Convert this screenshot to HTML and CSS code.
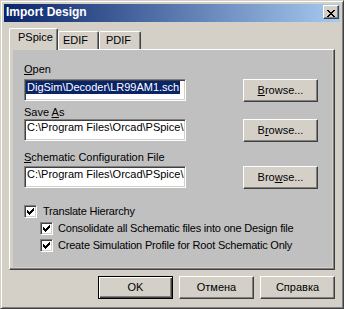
FILE: index.html
```html
<!DOCTYPE html>
<html lang="en">
<head>
    <meta charset="UTF-8">
    <meta name="viewport" content="width=device-width, initial-scale=1.0">
    <title>Import Design</title>
    <link rel="stylesheet" href="styles.css">
</head>
<body>
    <div class="window">
      <div class="titlebar">
        <span class="title">Import Design</span>
        <button class="close-btn" type="button" aria-label="Close">
          <svg width="8" height="7" viewBox="0 0 8 7" shape-rendering="crispEdges">
            <path d="M0 0h2v1h-2z M6 0h2v1h-2z M1 1h2v1h-2z M5 1h2v1h-2z M2 2h4v1h-4z M3 3h2v1h-2z M2 4h4v1h-4z M1 5h2v1h-2z M5 5h2v1h-2z M0 6h2v1h-2z M6 6h2v1h-2z" fill="#000"/>
          </svg>
        </button>
      </div>

      <div class="tabs">
        <div class="tab tab-active tab-pspice">PSpice</div>
        <div class="tab tab-edif">EDIF</div>
        <div class="tab tab-pdif">PDIF</div>
      </div>

      <div class="panel">
        <div class="page">
          <div class="label label-open"><u>O</u>pen</div>
          <div class="field-row">
            <div class="edit"><span class="edit-text selected">DigSim\Decoder\LR99AM1.sch</span></div>
            <button class="btn" type="button"><u>B</u>rowse...</button>
          </div>

          <div class="label label-save">Save <u>A</u>s</div>
          <div class="field-row">
            <div class="edit"><span class="edit-text">C:\Program Files\Orcad\PSpice\</span></div>
            <button class="btn" type="button">B<u>r</u>owse...</button>
          </div>

          <div class="label label-config"><u>S</u>chematic Configuration File</div>
          <div class="field-row">
            <div class="edit"><span class="edit-text">C:\Program Files\Orcad\PSpice\</span></div>
            <button class="btn" type="button">Bro<u>w</u>se...</button>
          </div>

          <div class="check-row check-first">
            <span class="checkbox">
              <svg width="7" height="7" viewBox="0 0 7 7" shape-rendering="crispEdges">
                <path d="M6 0h1v1h-1z M5 1h2v1h-2z M0 2h1v1h-1z M4 2h3v1h-3z M0 3h2v1h-2z M3 3h3v1h-3z M0 4h5v1h-5z M1 5h3v1h-3z M2 6h1v1h-1z" fill="#000"/>
              </svg>
            </span>
            <span class="check-text">Translate Hierarchy</span>
          </div>
          <div class="check-row check-sub">
            <span class="checkbox">
              <svg width="7" height="7" viewBox="0 0 7 7" shape-rendering="crispEdges">
                <path d="M6 0h1v1h-1z M5 1h2v1h-2z M0 2h1v1h-1z M4 2h3v1h-3z M0 3h2v1h-2z M3 3h3v1h-3z M0 4h5v1h-5z M1 5h3v1h-3z M2 6h1v1h-1z" fill="#000"/>
              </svg>
            </span>
            <span class="check-text">Consolidate all Schematic files into one Design file</span>
          </div>
          <div class="check-row check-sub">
            <span class="checkbox">
              <svg width="7" height="7" viewBox="0 0 7 7" shape-rendering="crispEdges">
                <path d="M6 0h1v1h-1z M5 1h2v1h-2z M0 2h1v1h-1z M4 2h3v1h-3z M0 3h2v1h-2z M3 3h3v1h-3z M0 4h5v1h-5z M1 5h3v1h-3z M2 6h1v1h-1z" fill="#000"/>
              </svg>
            </span>
            <span class="check-text">Create Simulation Profile for Root Schematic Only</span>
          </div>
        </div>
      </div>

      <div class="dialog-buttons">
        <button class="btn btn-default" type="button">OK</button>
        <button class="btn" type="button">Отмена</button>
        <button class="btn" type="button">Справка</button>
      </div>
    </div>
</body>
</html>
```

FILE: styles.css
```css
* {
    box-sizing: border-box;
}
body {
    margin: 0;
    background-color: #d4d0c8;
    font-family: "Liberation Sans", Arial, sans-serif;
    font-size: 11px;
    line-height: 13px;
    color: #000;
}
.window {
    display: flex;
    flex-direction: column;
    width: 344px;
    height: 309px;
    padding: 3px;
    border: 1px solid;
    border-color: #d4d0c8 #404040 #404040 #d4d0c8;
    box-shadow: inset 1px 1px #fff, inset -1px -1px #808080;
    background-color: #d4d0c8;
}

/* title bar */
.titlebar {
    display: flex;
    align-items: center;
    height: 18px;
    padding: 0 1px 2px 2px;
    background: linear-gradient(to right, #0a246a, #a6caf0);
}
.title {
    color: #fff;
    font-weight: bold;
    font-size: 12px;
    line-height: 14px;
}
.close-btn {
    margin-left: auto;
    width: 16px;
    height: 14px;
    padding: 0;
    border: 1px solid;
    border-color: #fff #404040 #404040 #fff;
    box-shadow: inset -1px -1px #808080;
    background-color: #d4d0c8;
}
.close-btn svg {
    display: block;
    margin: 2px 0 0 3px;
}

/* tabs */
.tabs {
    display: flex;
    align-items: flex-end;
    height: 21px;
    margin-top: 6px;
    padding-left: 5px;
}
.tab {
    height: 18px;
    padding-top: 2px;
    border-top: 1px solid #fff;
    border-left: 1px solid #fff;
    border-right: 1px solid #404040;
    border-radius: 2px 2px 0 0;
    box-shadow: inset -1px 0 #808080;
    background-color: #d4d0c8;
    white-space: nowrap;
}
.tab-active {
    position: relative;
    z-index: 1;
    height: 22px;
    margin-bottom: -1px;
}
.tab-pspice {
    width: 49px;
    padding-left: 8px;
}
.tab-edif {
    width: 41px;
    padding-left: 4px;
}
.tab-pdif {
    width: 42px;
    padding-left: 6px;
}

/* tab page */
.panel {
    height: 221px;
    margin: 0 5px;
    padding: 0 2px 2px 3px;
    border: 1px solid;
    border-color: #fff #404040 #404040 #fff;
    box-shadow: inset -1px -1px #808080;
}
.page {
    display: flex;
    flex-direction: column;
    height: 100%;
    padding: 13px 14px 0 11px;
    background-color: #c0c0c0;
}
.label-open {
    margin-bottom: 3px;
}
.label-save {
    margin-top: 4px;
}
.label-config {
    margin-top: 9px;
    margin-bottom: 2px;
}
.field-row {
    display: flex;
    justify-content: space-between;
    align-items: flex-start;
    height: 23px;
}
.edit {
    width: 162px;
    height: 22px;
    padding-top: 1px;
    overflow: hidden;
    white-space: nowrap;
    border: 1px solid;
    border-color: #808080 #fff #fff #808080;
    box-shadow: inset 1px 1px #404040, inset -1px -1px #d4d0c8;
    background-color: #fff;
}
.edit-text {
    display: inline-block;
    margin-left: 1px;
    padding: 0 1px;
}
.selected {
    background-color: #0a246a;
    color: #fff;
}

/* buttons */
.btn {
    width: 75px;
    height: 23px;
    margin: 0;
    padding: 0;
    font: inherit;
    line-height: 13px;
    color: #000;
    border: 1px solid;
    border-color: #fff #404040 #404040 #fff;
    box-shadow: inset -1px -1px #808080;
    background-color: #d4d0c8;
}
.btn-default {
    border-color: #000;
    box-shadow: inset 1px 1px #fff, inset -1px -1px #404040, inset -2px -2px #808080;
}
.dialog-buttons {
    display: flex;
    justify-content: flex-end;
    gap: 6px;
    margin-top: 6px;
    padding-right: 5px;
}

/* checkboxes */
.check-row {
    display: flex;
    align-items: flex-start;
    gap: 6px;
    height: 13px;
}
.check-first {
    margin-top: 16px;
}
.check-sub {
    margin-top: 4px;
    padding-left: 16px;
    gap: 5px;
}
.check-text {
    white-space: nowrap;
    letter-spacing: -0.2px;
}
.checkbox {
    width: 13px;
    height: 13px;
    flex-shrink: 0;
    padding: 2px;
    border: 1px solid;
    border-color: #808080 #fff #fff #808080;
    box-shadow: inset 1px 1px #404040, inset -1px -1px #d4d0c8;
    background-color: #fff;
}
.checkbox svg {
    display: block;
}
```
